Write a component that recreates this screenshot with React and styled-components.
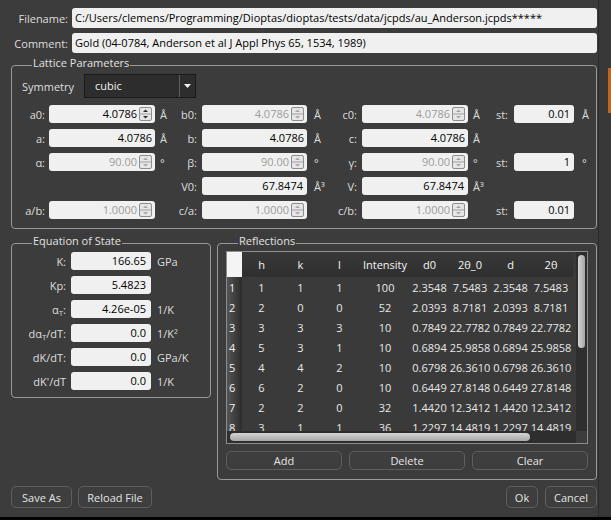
import styled, { createGlobalStyle } from 'styled-components'

const GlobalStyle = createGlobalStyle`
  html, body {
    margin: 0;
    padding: 0;
    background: #000;
  }
`

const Screen = styled.div`
  width: 611px;
  height: 520px;
  display: flex;
  align-items: flex-start;
  background: #000;
  overflow: hidden;
`

const Dialog = styled.div`
  box-sizing: border-box;
  width: 598px;
  height: 517px;
  padding: 8px 1px 0 11px;
  display: flex;
  flex-direction: column;
  background: #3c3c3c;
  color: #dedede;
  font-family: "Open Sans", "Liberation Sans", sans-serif;
  font-size: 11px;
`

const SideStrip = styled.div`
  box-sizing: border-box;
  width: 13px;
  height: 517px;
  padding-top: 68px;
  display: flex;
  justify-content: flex-end;
  align-items: flex-start;
  background: #383838;
  border-left: 1px solid #2b2b2b;
`

const OrangeMark = styled.div`
  width: 3px;
  height: 45px;
  background: #c5651c;
`

const FileRow = styled.div`
  display: grid;
  grid-template-columns: 57px 1fr;
  column-gap: 4px;
  align-items: center;
  height: 20px;
  & + & {
    margin-top: 5px;
  }
`

const RowLabel = styled.span`
  text-align: right;
  white-space: nowrap;
`

const TextField = styled.div`
  box-sizing: border-box;
  height: ${p => p.$h || 18}px;
  line-height: ${p => p.$h || 18}px;
  padding: 0 ${p => p.$pr ?? 3}px 0 3px;
  border-radius: 3px;
  background: #f0f0f0;
  color: ${p => (p.$disabled ? '#9c9c9c' : '#000')};
  text-align: ${p => (p.$left ? 'left' : 'right')};
  white-space: nowrap;
  overflow: hidden;
`

const SpinBox = styled.div`
  box-sizing: border-box;
  height: 18px;
  display: flex;
  align-items: center;
  padding-right: 3px;
  border-radius: 3px;
  background: #f0f0f0;
  color: ${p => (p.$disabled ? '#9c9c9c' : '#000')};
`

const SpinValue = styled.span`
  flex: 1;
  padding-right: 2px;
  line-height: 18px;
  text-align: right;
  white-space: nowrap;
`

const ArrowBox = styled.svg`
  display: block;
  flex: none;
`

const Group = styled.fieldset`
  box-sizing: border-box;
  margin: 0;
  min-width: 0;
  padding: ${p => p.$pad};
  border: 1px solid #999;
  border-radius: 4px;
`

const GroupTitle = styled.legend`
  margin-left: ${p => p.$indent ?? 13}px;
  padding: 0 1px 4px 1px;
  line-height: 10px;
  color: #e2e2e2;
`

const SymmetryRow = styled.div`
  display: flex;
  align-items: center;
  height: 24px;
`

const SymmetryLabel = styled.span`
  box-sizing: border-box;
  width: 65px;
  padding-left: 3px;
`

const Combo = styled.div`
  box-sizing: border-box;
  width: 112px;
  height: 24px;
  display: flex;
  background: #2d2d2d;
  border: 1px solid #1a1a1a;
  color: #f2f2f2;
`

const ComboText = styled.span`
  flex: 1;
  padding-left: 10px;
  line-height: 22px;
`

const ComboArrow = styled.span`
  width: 15px;
  display: flex;
  align-items: center;
  justify-content: center;
  border-left: 1px solid #5c5c5c;
`

const LatticeGrid = styled.div`
  display: grid;
  grid-template-columns: 30px 106px 20px 27px 105px 28px 27px 106px 19px 27px 60px 1fr;
  grid-auto-rows: 18px;
  row-gap: 6px;
  align-items: center;
  margin-top: 7px;
`

const GridLabel = styled.span`
  padding-right: ${p => p.$pr ?? 5}px;
  text-align: right;
  white-space: nowrap;
`

const Unit = styled.span`
  padding-left: ${p => p.$pl ?? 5}px;
  white-space: nowrap;
`

const Blank = styled.span``

const Middle = styled.div`
  display: flex;
  align-items: flex-start;
  gap: 6px;
  margin-top: 7px;
`

const EosGroup = styled(Group)`
  width: 200px;
  flex: none;
`

const EosGrid = styled.div`
  display: grid;
  grid-template-columns: 47px 80px 1fr;
  grid-auto-rows: 18px;
  column-gap: 5px;
  row-gap: 6px;
  align-items: center;
`

const Sub = styled.sub`
  font-size: 8px;
  line-height: 0;
  vertical-align: -2px;
`

const ReflGroup = styled(Group)`
  flex: 1;
`

const TableFrame = styled.div`
  box-sizing: border-box;
  height: 193px;
  display: grid;
  grid-template-columns: 1fr 11px;
  grid-template-rows: 1fr 12px;
  border: 1px solid #8c8c8c;
  background: #3a3a3a;
`

const Viewport = styled.div`
  overflow: hidden;
`

const DataTable = styled.table`
  width: 346px;
  border-collapse: collapse;
  table-layout: fixed;
  color: #e8e8e8;
`

const HeadCell = styled.th`
  height: 25px;
  padding: 0;
  font-weight: normal;
  color: #f4f4f4;
  text-align: center;
  white-space: nowrap;
  background: linear-gradient(#383838, #2f2f2f);
`

const CornerCell = styled.th`
  padding: 0;
  background: #f4f4f4;
`

const RowHead = styled.td`
  height: 20px;
  padding: 0 0 0 2px;
  text-align: left;
  color: #f0f0f0;
  background: linear-gradient(to right, #555, #2c2c2c);
`

const Cell = styled.td`
  height: 20px;
  padding: 0;
  text-align: center;
  white-space: nowrap;
`

const VTrack = styled.div`
  box-sizing: border-box;
  padding: 3px 2px 0 2px;
  background: #2e2e2e;
`

const HTrack = styled.div`
  box-sizing: border-box;
  padding: 2px 3px 0 3px;
  background: #2e2e2e;
`

const VHandle = styled.div`
  height: 93px;
  border-radius: 4px;
  background: linear-gradient(to right, #d4d4d4, #a6a6a6);
`

const HHandle = styled.div`
  width: 300px;
  height: 8px;
  border-radius: 4px;
  background: linear-gradient(#d4d4d4, #a6a6a6);
`

const ScrollCorner = styled.div`
  background: #3c3c3c;
`

const ButtonBar = styled.div`
  display: flex;
  gap: ${p => p.$gap ?? 7}px;
  margin-top: ${p => p.$top ?? 0}px;
`

const PushButton = styled.button`
  box-sizing: border-box;
  flex: ${p => (p.$w ? 'none' : 1)};
  width: ${p => (p.$w ? `${p.$w}px` : 'auto')};
  height: ${p => p.$h ?? 19}px;
  padding: 0;
  font: inherit;
  color: #e4e4e4;
  background: #3e3e3e;
  border: 1px solid #5e5e5e;
  border-radius: 5px;
`

const Spacer = styled.div`
  flex: 1;
`

const SpinArrows = ({ disabled }) => {
  const c = disabled ? '#a8a8a8' : '#2a2a2a'
  return (
    <ArrowBox width="13" height="14" viewBox="0 0 13 14">
      <rect x="0.5" y="0.5" width="12" height="13" rx="1.5" fill="#e6e6e6" stroke="#8e8e8e" />
      <line x1="1" y1="7" x2="12" y2="7" stroke="#a0a0a0" />
      <path d="M4 5 L6.5 2.5 L9 5 Z" fill={c} />
      <path d="M4 9 L6.5 11.5 L9 9 Z" fill={c} />
    </ArrowBox>
  )
}

const Spin = ({ value, disabled }) => (
  <SpinBox $disabled={disabled}>
    <SpinValue>{value}</SpinValue>
    <SpinArrows disabled={disabled} />
  </SpinBox>
)

const colWidths = [15, 39, 39, 39, 52, 37, 44, 37, 44]
const headers = ['h', 'k', 'l', 'Intensity', 'd0', '2θ_0', 'd', '2θ']
const reflections = [
  [1, 1, 1, 100, '2.3548', '7.5483', '2.3548', '7.5483'],
  [2, 0, 0, 52, '2.0393', '8.7181', '2.0393', '8.7181'],
  [3, 3, 3, 10, '0.7849', '22.7782', '0.7849', '22.7782'],
  [5, 3, 1, 10, '0.6894', '25.9858', '0.6894', '25.9858'],
  [4, 4, 2, 10, '0.6798', '26.3610', '0.6798', '26.3610'],
  [6, 2, 0, 10, '0.6449', '27.8148', '0.6449', '27.8148'],
  [2, 2, 0, 32, '1.4420', '12.3412', '1.4420', '12.3412'],
  [3, 1, 1, 36, '1.2297', '14.4819', '1.2297', '14.4819'],
]

const App = () => (
  <Screen>
    <GlobalStyle />
    <Dialog>
      <FileRow>
        <RowLabel>Filename:</RowLabel>
        <TextField $h={20} $left>
          C:/Users/clemens/Programming/Dioptas/dioptas/tests/data/jcpds/au_Anderson.jcpds*****
        </TextField>
      </FileRow>
      <FileRow>
        <RowLabel>Comment:</RowLabel>
        <TextField $h={20} $left>
          Gold (04-0784, Anderson et al J Appl Phys 65, 1534, 1989)
        </TextField>
      </FileRow>

      <Group $pad="2px 7px 9px 7px" style={{ marginTop: 5 }}>
        <GroupTitle>Lattice Parameters</GroupTitle>
        <SymmetryRow>
          <SymmetryLabel>Symmetry</SymmetryLabel>
          <Combo>
            <ComboText>cubic</ComboText>
            <ComboArrow>
              <svg width="7" height="4" viewBox="0 0 7 4">
                <path d="M0 0 L7 0 L3.5 4 Z" fill="#f2f2f2" />
              </svg>
            </ComboArrow>
          </Combo>
        </SymmetryRow>
        <LatticeGrid>
          <GridLabel $pr={4}>a0:</GridLabel>
          <Spin value="4.0786" />
          <Unit>Å</Unit>
          <GridLabel>b0:</GridLabel>
          <Spin value="4.0786" disabled />
          <Unit $pl={7}>Å</Unit>
          <GridLabel>c0:</GridLabel>
          <Spin value="4.0786" disabled />
          <Unit>Å</Unit>
          <GridLabel $pr={6}>st:</GridLabel>
          <TextField $pr={4}>0.01</TextField>
          <Unit $pl={8}>Å</Unit>

          <GridLabel $pr={4}>a:</GridLabel>
          <TextField>4.0786</TextField>
          <Unit>Å</Unit>
          <GridLabel>b:</GridLabel>
          <TextField>4.0786</TextField>
          <Unit $pl={7}>Å</Unit>
          <GridLabel>c:</GridLabel>
          <TextField>4.0786</TextField>
          <Unit>Å</Unit>
          <Blank />
          <Blank />
          <Blank />

          <GridLabel $pr={4}>α:</GridLabel>
          <Spin value="90.00" disabled />
          <Unit>°</Unit>
          <GridLabel>β:</GridLabel>
          <Spin value="90.00" disabled />
          <Unit $pl={7}>°</Unit>
          <GridLabel>γ:</GridLabel>
          <Spin value="90.00" disabled />
          <Unit>°</Unit>
          <GridLabel $pr={6}>st:</GridLabel>
          <TextField $pr={4}>1</TextField>
          <Unit $pl={8}>°</Unit>

          <Blank />
          <Blank />
          <Blank />
          <GridLabel>V0:</GridLabel>
          <TextField $pr={4}>67.8474</TextField>
          <Unit $pl={7}>Å³</Unit>
          <GridLabel>V:</GridLabel>
          <TextField $pr={4}>67.8474</TextField>
          <Unit>Å³</Unit>
          <Blank />
          <Blank />
          <Blank />

          <GridLabel $pr={4}>a/b:</GridLabel>
          <Spin value="1.0000" disabled />
          <Blank />
          <GridLabel>c/a:</GridLabel>
          <Spin value="1.0000" disabled />
          <Blank />
          <GridLabel>c/b:</GridLabel>
          <Spin value="1.0000" disabled />
          <Blank />
          <GridLabel $pr={6}>st:</GridLabel>
          <TextField $pr={4}>0.01</TextField>
          <Blank />
        </LatticeGrid>
      </Group>

      <Middle>
        <EosGroup $pad="2px 7px 7px 7px">
          <GroupTitle>Equation of State</GroupTitle>
          <EosGrid>
            <GridLabel $pr={0}>K:</GridLabel>
            <TextField $pr={5}>166.65</TextField>
            <Unit $pl={1}>GPa</Unit>
            <GridLabel $pr={0}>Kp:</GridLabel>
            <TextField $pr={5}>5.4823</TextField>
            <Blank />
            <GridLabel $pr={0}>
              α<Sub>T</Sub>:
            </GridLabel>
            <TextField $pr={5}>4.26e-05</TextField>
            <Unit $pl={1}>1/K</Unit>
            <GridLabel $pr={0}>
              dα<Sub>T</Sub>/dT:
            </GridLabel>
            <TextField $pr={5}>0.0</TextField>
            <Unit $pl={1}>1/K²</Unit>
            <GridLabel $pr={0}>dK/dT:</GridLabel>
            <TextField $pr={5}>0.0</TextField>
            <Unit $pl={1}>GPa/K</Unit>
            <GridLabel $pr={0}>dK'/dT</GridLabel>
            <TextField $pr={5}>0.0</TextField>
            <Unit $pl={1}>1/K</Unit>
          </EosGrid>
        </EosGroup>

        <ReflGroup $pad="1px 8px 9px 8px">
          <GroupTitle $indent={12}>Reflections</GroupTitle>
          <TableFrame>
            <Viewport>
              <DataTable>
                <colgroup>
                  {colWidths.map((w, i) => (
                    <col key={i} style={{ width: w }} />
                  ))}
                </colgroup>
                <thead>
                  <tr>
                    <CornerCell />
                    {headers.map(h => (
                      <HeadCell key={h}>{h}</HeadCell>
                    ))}
                  </tr>
                </thead>
                <tbody>
                  {reflections.map((r, i) => (
                    <tr key={i}>
                      <RowHead>{i + 1}</RowHead>
                      {r.map((v, j) => (
                        <Cell key={j}>{v}</Cell>
                      ))}
                    </tr>
                  ))}
                </tbody>
              </DataTable>
            </Viewport>
            <VTrack>
              <VHandle />
            </VTrack>
            <HTrack>
              <HHandle />
            </HTrack>
            <ScrollCorner />
          </TableFrame>
          <ButtonBar $top={7}>
            <PushButton>Add</PushButton>
            <PushButton>Delete</PushButton>
            <PushButton>Clear</PushButton>
          </ButtonBar>
        </ReflGroup>
      </Middle>

      <ButtonBar $top={6} $gap={6}>
        <PushButton $w={61} $h={22}>Save As</PushButton>
        <PushButton $w={74} $h={22}>Reload File</PushButton>
        <Spacer />
        <PushButton $w={32} $h={22}>Ok</PushButton>
        <PushButton $w={52} $h={22} style={{ marginLeft: 1 }}>Cancel</PushButton>
      </ButtonBar>
    </Dialog>
    <SideStrip>
      <OrangeMark />
    </SideStrip>
  </Screen>
)

export default App
